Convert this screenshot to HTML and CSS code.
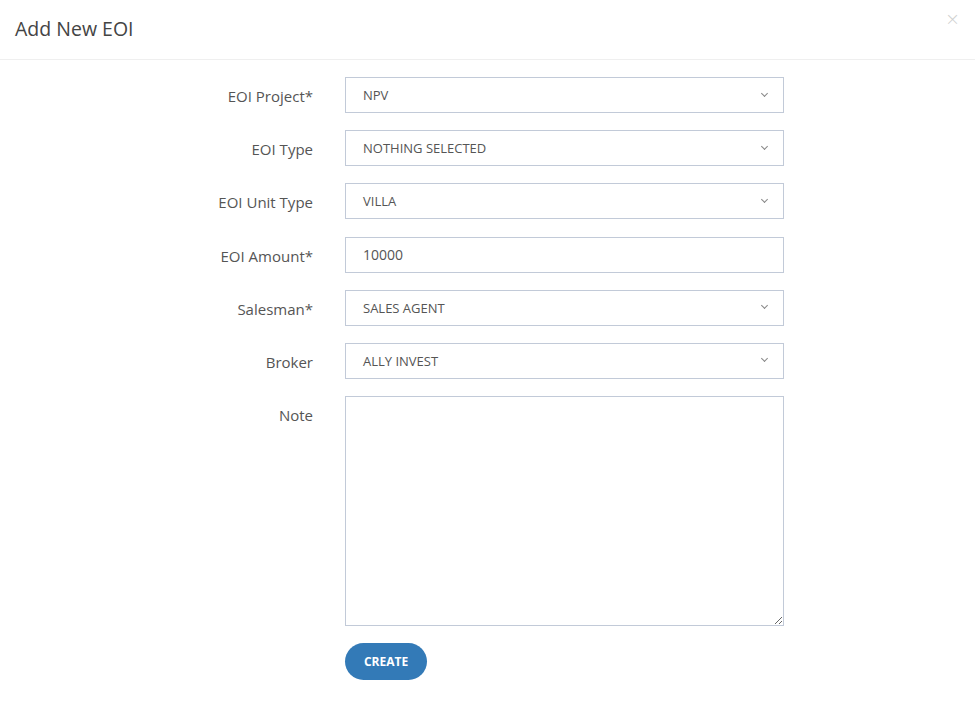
FILE: index.html
```
<!DOCTYPE html>
<html lang="en">
<head>
    <meta charset="UTF-8">
    <meta name="viewport" content="width=device-width, initial-scale=1.0">
    <title>Add New EOI</title>
    <link rel="stylesheet" href="styles.css">
</head>
<body>
    <div class="modal">
        <div class="modal-header">
            <h4 class="modal-title">Add New EOI</h4>
            <button class="close" type="button">&times;</button>
        </div>
        <div class="modal-body">
            <div class="form-row">
                <label class="form-label">EOI Project*</label>
                <div class="select-box">NPV<span class="caret"></span></div>
            </div>
            <div class="form-row">
                <label class="form-label">EOI Type</label>
                <div class="select-box">Nothing selected<span class="caret"></span></div>
            </div>
            <div class="form-row">
                <label class="form-label">EOI Unit Type</label>
                <div class="select-box">Villa<span class="caret"></span></div>
            </div>
            <div class="form-row">
                <label class="form-label">EOI Amount*</label>
                <input class="text-input" type="text" value="10000">
            </div>
            <div class="form-row">
                <label class="form-label">Salesman*</label>
                <div class="select-box">Sales Agent<span class="caret"></span></div>
            </div>
            <div class="form-row">
                <label class="form-label">Broker</label>
                <div class="select-box">Ally Invest<span class="caret"></span></div>
            </div>
            <div class="form-row">
                <label class="form-label">Note</label>
                <textarea class="note-input"></textarea>
            </div>
            <div class="form-row">
                <div class="form-label"></div>
                <button class="button" type="button">Create</button>
            </div>
        </div>
    </div>
</body>
</html>
```
FILE: styles.css
```
body {
    margin: 0;
    font-family: "Open Sans", sans-serif;
    color: #555;
    background: #fff;
}
.modal-header {
    height: 60px;
    box-sizing: border-box;
    padding: 0 15px;
    border-bottom: 1px solid #efefef;
    display: flex;
    align-items: center;
    justify-content: space-between;
}
.modal-title {
    margin: 0;
    font-size: 19.5px;
    font-weight: 400;
    color: #444;
    padding-bottom: 2px;
}
.close {
    border: none;
    background: none;
    color: #d0d0d0;
    font-size: 18px;
    font-family: "DejaVu Sans", sans-serif;
    font-weight: 300;
    padding: 0;
    margin: 8px 0 0 0;
    align-self: flex-start;
    cursor: pointer;
}
.modal-body {
    padding-top: 17px;
}
.form-row {
    display: flex;
    align-items: flex-start;
    margin-bottom: 17.2px;
}
.form-label {
    width: 313px;
    text-align: right;
    font-size: 15px;
    line-height: 20px;
    padding-top: 9px;
    box-sizing: border-box;
    color: #555;
}
.select-box,
.text-input,
.note-input {
    margin-left: 32px;
    width: 439px;
    box-sizing: border-box;
    border: 1px solid #c2cad8;
    background: #fff;
}
.select-box {
    height: 36px;
    padding: 0 17px;
    display: flex;
    align-items: center;
    justify-content: space-between;
    font-size: 13px;
    text-transform: uppercase;
    color: #555;
}
.caret {
    width: 4px;
    height: 4px;
    border-right: 1px solid #888;
    border-bottom: 1px solid #888;
    transform: rotate(45deg);
    margin-right: -1px;
    margin-top: -4px;
}
.text-input {
    height: 36px;
    padding: 0 17px;
    font-family: "Open Sans", sans-serif;
    font-size: 14px;
    color: #555;
    outline: none;
}
.note-input {
    height: 230px;
    resize: vertical;
    font-family: "Open Sans", sans-serif;
    outline: none;
}
.button {
    margin-left: 32px;
    height: 37px;
    width: 82px;
    border: none;
    border-radius: 19px;
    background-color: #337ab7;
    color: #fff;
    font-family: "Open Sans", sans-serif;
    font-size: 12px;
    font-weight: 700;
    text-transform: uppercase;
    cursor: pointer;
}
```
